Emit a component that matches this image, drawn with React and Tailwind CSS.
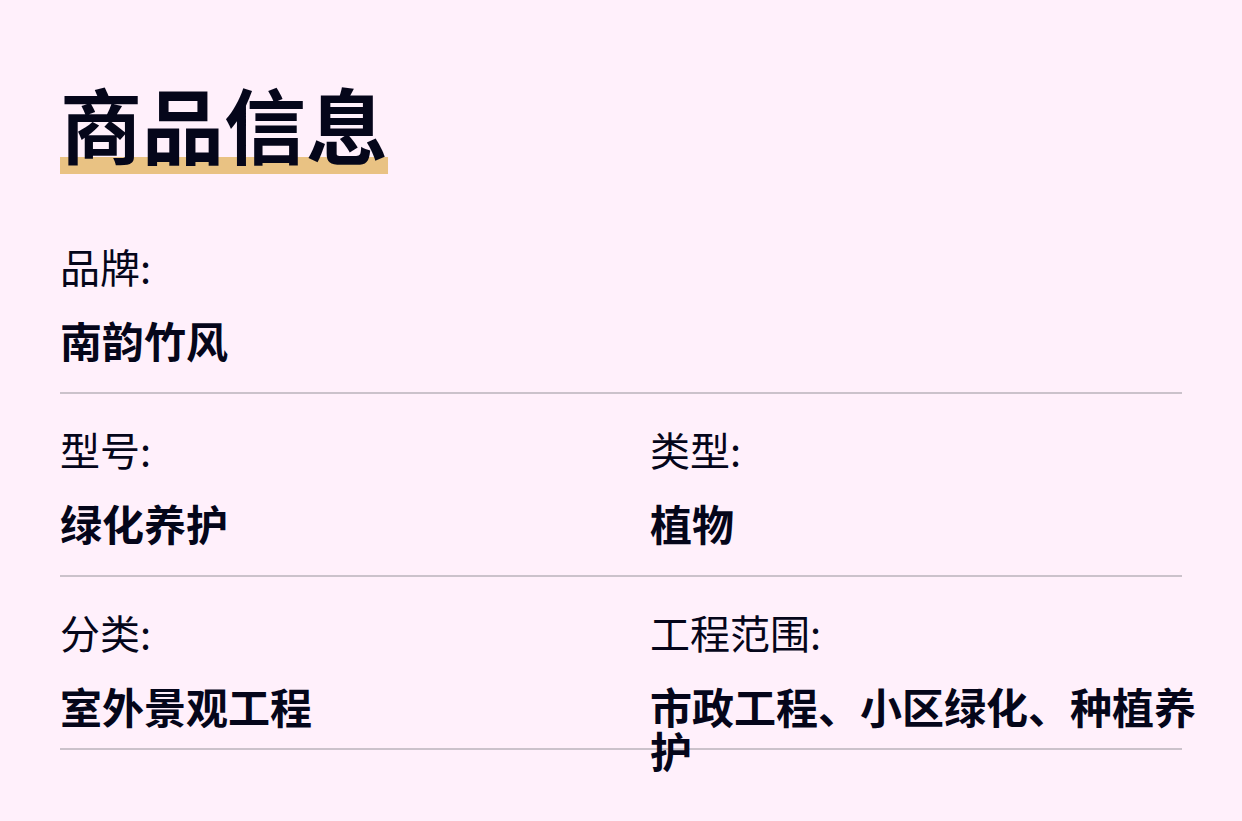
const FONT = "font-['Noto_Sans_CJK_SC',sans-serif]";

const Field = ({ label, value }) => (
  <div>
    <div className="h-[40px] text-[40px] leading-[40px] font-normal">{label}:</div>
    <div className="mt-[32px] text-[42px] leading-[44px] font-bold">{value}</div>
  </div>
);

export default function App() {
  return (
    <div className={`min-h-[821px] w-full bg-[#fff0fb] text-[#05061a] ${FONT}`}>
      <div className="px-[60px] pt-[82px]">
        <h1 className="text-[82px] leading-[82px] font-bold underline decoration-[#e9c283] decoration-[17px] underline-offset-[-1px]">
          商品信息
        </h1>

        <div className="mt-[47px] w-[1122px]">
          <div className="flex pt-[35px] pb-[30px] border-b-2 border-[#cbc2cb]">
            <div className="w-[590px] shrink-0">
              <Field label="品牌" value="南韵竹风" />
            </div>
          </div>
          <div className="flex pt-[35px] pb-[30px] border-b-2 border-[#cbc2cb]">
            <div className="w-[590px] shrink-0">
              <Field label="型号" value="绿化养护" />
            </div>
            <div className="w-[560px] shrink-0">
              <Field label="类型" value="植物" />
            </div>
          </div>
          <div className="flex h-[173px] pt-[35px] border-b-2 border-[#cbc2cb]">
            <div className="w-[590px] shrink-0">
              <Field label="分类" value="室外景观工程" />
            </div>
            <div className="w-[560px] shrink-0">
              <Field label="工程范围" value="市政工程、小区绿化、种植养护" />
            </div>
          </div>
        </div>
      </div>
    </div>
  );
}
